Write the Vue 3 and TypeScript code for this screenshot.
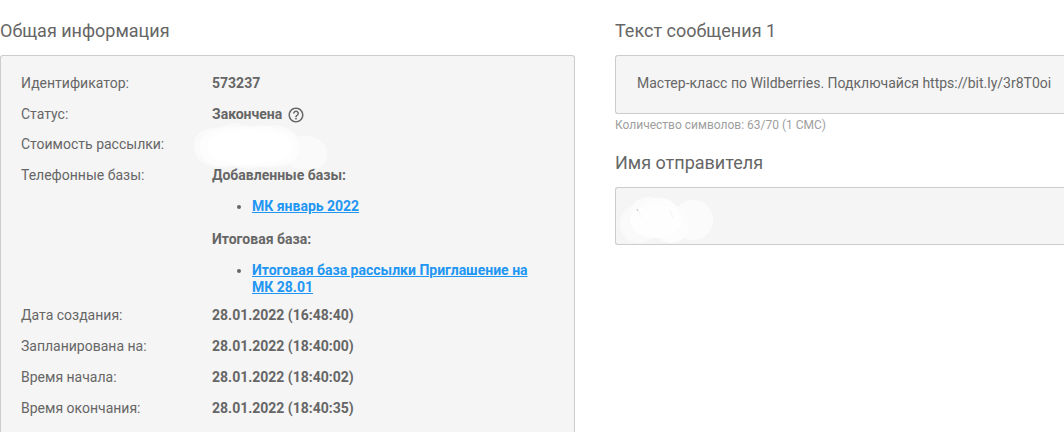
<script setup lang="ts">
interface Base {
  title: string
  names: string[]
}

const bases: Base[] = [
  { title: 'Добавленные базы:', names: ['МК январь 2022'] },
  { title: 'Итоговая база:', names: ['Итоговая база рассылки Приглашение на МК 28.01'] },
]

const dates: { label: string; value: string }[] = [
  { label: 'Дата создания:', value: '28.01.2022 (16:48:40)' },
  { label: 'Запланирована на:', value: '28.01.2022 (18:40:00)' },
  { label: 'Время начала:', value: '28.01.2022 (18:40:02)' },
  { label: 'Время окончания:', value: '28.01.2022 (18:40:35)' },
]
</script>

<template>
  <main class="page">
    <section class="column">
      <h2 class="heading">Общая информация</h2>
      <dl class="card info">
        <div class="row">
          <dt>Идентификатор:</dt>
          <dd>573237</dd>
        </div>
        <div class="row status-row">
          <dt>Статус:</dt>
          <dd class="status">
            Закончена
            <button class="help" type="button" aria-label="Справка">
              <svg viewBox="0 0 24 24" width="18" height="18" fill="currentColor" aria-hidden="true">
                <path d="M11 18h2v-2h-2v2zm1-16C6.480 2 2 6.480 2 12s4.480 10 10 10 10-4.480 10-10S17.520 2 12 2zm0 18c-4.410 0-8-3.590-8-8s3.590-8 8-8 8 3.590 8 8-3.590 8-8 8zm0-14c-2.210 0-4 1.790-4 4h2c0-1.100.9-2 2-2s2 .9 2 2c0 2-3 1.750-3 5h2c0-2.250 3-2.500 3-5 0-2.210-1.790-4-4-4z" />
              </svg>
            </button>
          </dd>
        </div>
        <div class="row">
          <dt>Стоимость рассылки:</dt>
          <dd class="masked">
            <svg class="cost-mask" viewBox="0 0 134 48" width="134" height="48" aria-hidden="true">
              <path d="M1 23C1 12 9 7 20 6Q29 5 34 3Q42-1 49 3Q55 3 59 5Q67 1 75 4Q83 1 89 5Q99 6 104 14Q132 12 134 31C134 43 127 47 117 47Q104 49 97 43Q82 47 67 45Q54 49 41 44Q27 47 18 44C7 41 1 34 1 23Z" fill="#fafafa" />
              <path d="M7 24C7 14 14 9 24 8Q39 4 52 5Q76 3 92 9C102 12 107 19 106 28C105 36 99 41 90 42Q61 46 37 43Q23 45 16 41Q7 36 7 24Z" fill="#fdfdfd" />
              <path d="M15 24Q16 13 31 10Q60 6 83 11Q99 14 99 26Q96 38 79 40Q50 43 29 40Q15 36 15 24Z" fill="#fff" />
            </svg>
          </dd>
        </div>
        <div class="row bases">
          <dt>Телефонные базы:</dt>
          <dd>
            <template v-for="base in bases" :key="base.title">
              <p class="base-title">{{ base.title }}</p>
              <ul class="base-list">
                <li v-for="name in base.names" :key="name">
                  <a href="#">{{ name }}</a>
                </li>
              </ul>
            </template>
          </dd>
        </div>
        <div v-for="item in dates" :key="item.label" class="row">
          <dt>{{ item.label }}</dt>
          <dd>{{ item.value }}</dd>
        </div>
      </dl>
    </section>

    <section class="column">
      <h2 class="heading">Текст сообщения 1</h2>
      <div class="card box">Мастер-класс по Wildberries. Подключайся https://bit.ly/3r8T0oi</div>
      <p class="counter">Количество символов: 63/70 (1 СМС)</p>
      <h2 class="heading">Имя отправителя</h2>
      <div class="card box masked">
        <svg class="sender-mask" viewBox="0 0 96 48" width="96" height="48" aria-hidden="true">
          <circle cx="22" cy="28" r="19" fill="#fafafa" />
          <circle cx="31" cy="20" r="19" fill="#fbfbfb" />
          <circle cx="76" cy="24" r="20" fill="#fbfbfb" />
          <circle cx="54" cy="28" r="19" fill="#fcfcfc" />
          <circle cx="43" cy="22" r="20" fill="#fdfdfd" />
          <ellipse cx="39" cy="25" rx="26" ry="17" fill="#fefefe" />
          <path d="M20 13l1 2" stroke="#bbb" />
          <path d="M21 15l3 6M53 14l3 8" stroke="#f4f4f4" />
        </svg>
      </div>
    </section>
  </main>
</template>

<style>
body {
  margin: 0;
  background: #fff;
}
</style>

<style scoped>
.page {
  display: grid;
  grid-template-columns: 575fr 449fr;
  column-gap: 40px;
  box-sizing: border-box;
  min-height: 100vh;
  padding-top: 20px;
  color: #666;
  font: 14px/17px Roboto, "Noto Sans", sans-serif;
}

.column {
  display: flex;
  flex-direction: column;
  min-width: 0;
}

.heading {
  margin: 0 0 13px;
  font-size: 18px;
  font-weight: 400;
  line-height: 22px;
}

.card {
  box-sizing: border-box;
  margin: 0;
  border: 1px solid #ccc;
  border-radius: 3px;
  background: #f5f5f5;
}

.info {
  display: flex;
  flex: 1;
  flex-direction: column;
  gap: 14px;
  padding: 19px 20px 14px;
  border-bottom: 0;
  border-bottom-left-radius: 0;
  border-bottom-right-radius: 0;
}

.row {
  display: grid;
  grid-template-columns: 191px 1fr;
}

.row dd {
  margin: 0;
  padding-right: 20px;
  font-weight: 700;
}

.status-row {
  height: 16px;
}

.status {
  display: flex;
  align-items: center;
  gap: 5px;
  height: 17px;
}

.help {
  display: flex;
  padding: 0;
  border: 0;
  background: none;
  color: inherit;
}

.masked {
  position: relative;
}

.cost-mask {
  position: absolute;
  top: -14px;
  left: -19px;
}

.sender-mask {
  position: absolute;
  top: 8px;
  left: 1px;
}

.bases {
  margin-bottom: -3px;
}

.base-title {
  margin: 0;
}

.base-list {
  margin: 14px 0 16px;
  padding-left: 40px;
}

.base-list:last-child {
  margin-bottom: 0;
}

.base-list a {
  color: #2196f3;
  text-decoration: underline;
}

.box {
  min-height: 58px;
  padding: 19px 0 21px 21px;
  border-right: 0;
  border-top-right-radius: 0;
  border-bottom-right-radius: 0;
}

.counter {
  margin: 2px 0 18px;
  color: #9e9e9e;
  font-size: 12px;
  line-height: 18px;
}
</style>
